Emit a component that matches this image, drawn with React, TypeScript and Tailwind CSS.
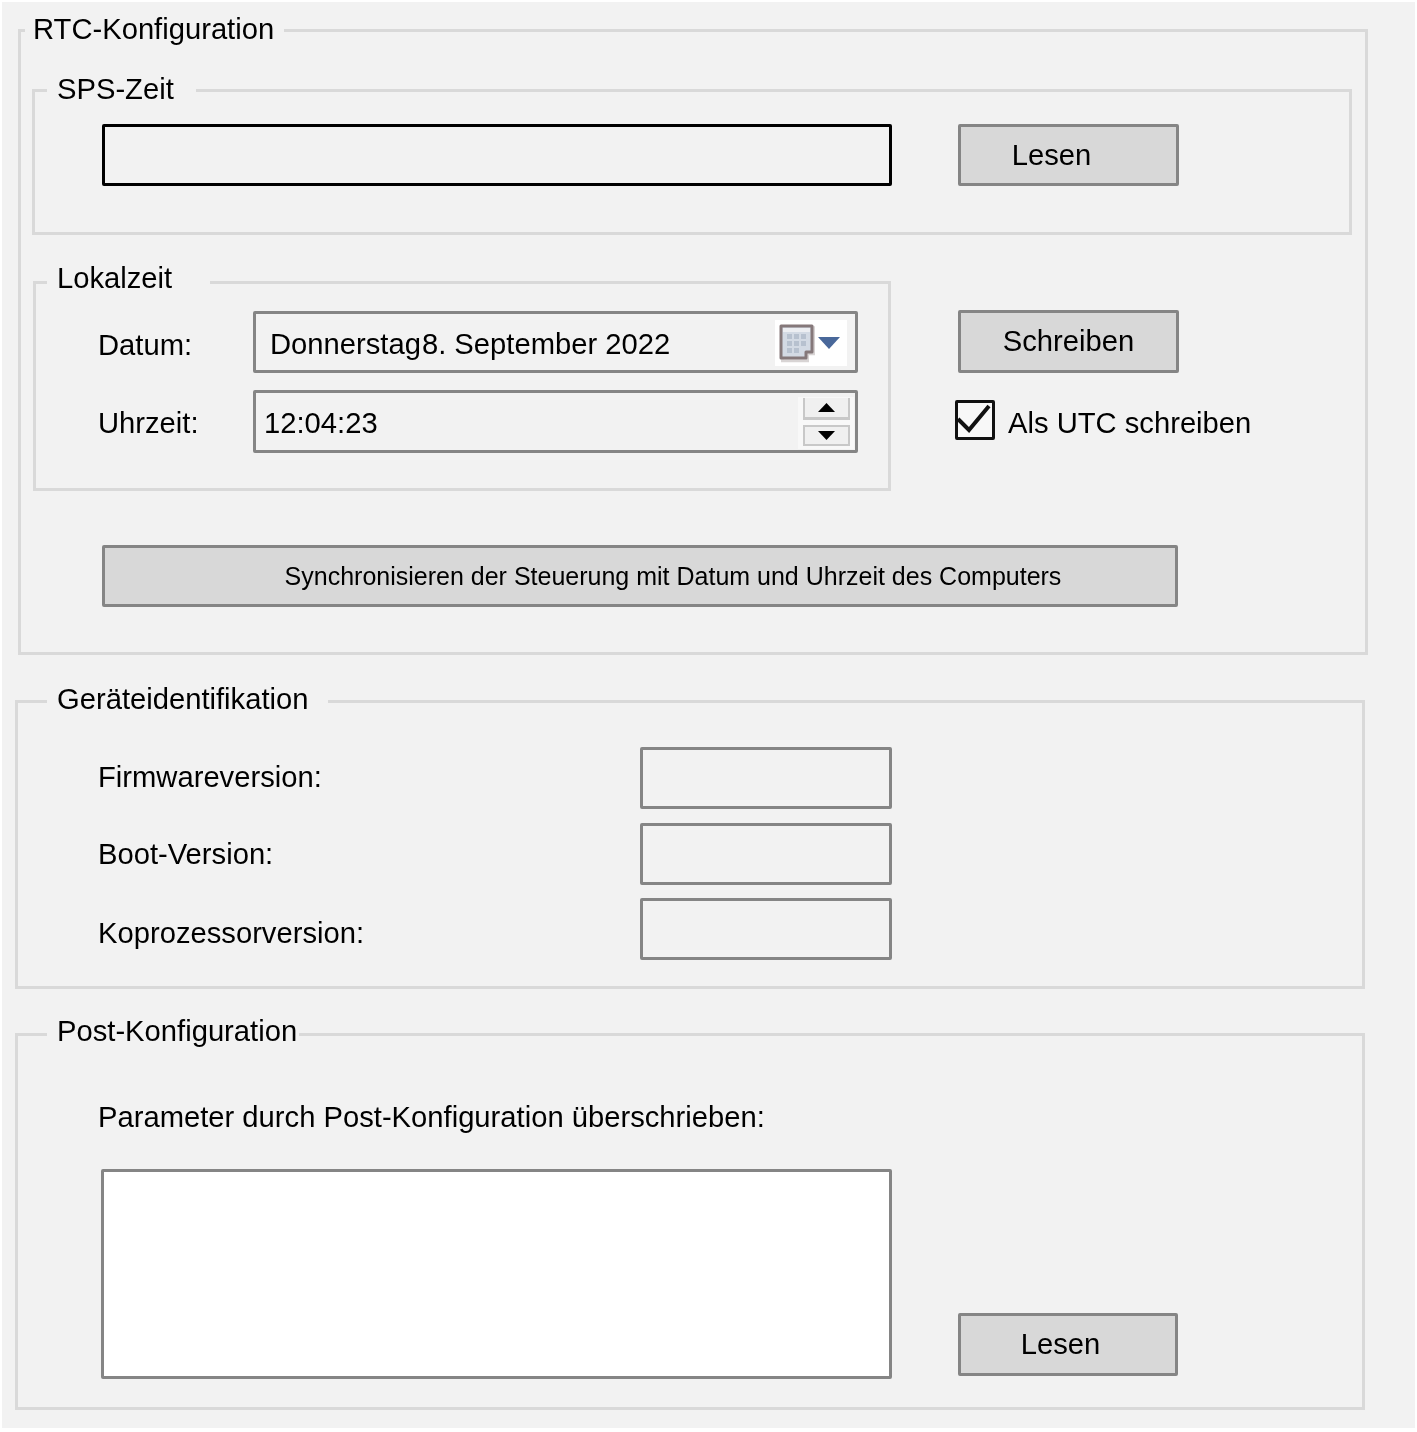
function Spin() {
  return (
    <div className="ml-auto mr-px mt-[2px] flex h-[52px] w-[56px] flex-col items-center bg-[#f8f8f8] pt-[1px]">
      <div className="flex h-[22px] w-[47px] items-center justify-center border-x-[2px] border-b-[3px] border-[#c8c8c8] bg-[#f0f0f0]">
        <svg width="17" height="9" viewBox="0 0 17 9"><path d="M8.5 0 L17 9 L0 9 Z" fill="#000" /></svg>
      </div>
      <div className="mt-[5px] flex h-[21px] w-[47px] items-center justify-center border-[2px] border-[#c8c8c8] bg-[#f0f0f0]">
        <svg width="17" height="9" viewBox="0 0 17 9"><path d="M0 0 L17 0 L8.5 9 Z" fill="#000" /></svg>
      </div>
    </div>
  );
}

function CalendarIcon() {
  return (
    <div className="ml-auto mr-[8px] mt-[2px] h-[46px] w-[72px] bg-white">
      <svg width="72" height="46" viewBox="0 0 72 46">
        <defs>
          <filter id="b" x="-10%" y="-10%" width="120%" height="120%"><feGaussianBlur stdDeviation="0.6" /></filter>
        </defs>
        <g filter="url(#b)">
          <path d="M7 7 H38 V33 H32 V40 H7 Z" fill="none" stroke="#d8d4d4" strokeWidth="3" transform="translate(0.5 0.8)" />
          <path d="M6 6 H37 V32 H31 V38 H6 Z" fill="#d3dae4" stroke="#85787a" strokeWidth="3" strokeLinejoin="round" />
          <rect x="8" y="8" width="27" height="4" fill="#eceef2" />
          <g fill="#b7c1cf">
            <rect x="12" y="14" width="5" height="5" /><rect x="19" y="14" width="5" height="5" /><rect x="26" y="14" width="5" height="5" />
            <rect x="12" y="21" width="5" height="5" /><rect x="19" y="21" width="5" height="5" /><rect x="26" y="21" width="5" height="5" />
            <rect x="12" y="28" width="5" height="5" /><rect x="19" y="28" width="5" height="5" />
          </g>
          <path d="M43 17 H65 L54 29 Z" fill="#4a689a" />
        </g>
      </svg>
    </div>
  );
}

export default function App() {
  return (
    <div className="h-[1432px] w-[1417px] bg-white p-[2px] font-['Liberation_Sans',Arial,sans-serif] text-[29.2px] leading-[34px] text-black">
      <div className="h-[1426px] w-[1413px] overflow-hidden bg-[#f2f2f2] pt-[27px] blur-[0.4px]">
        {/* RTC */}
        <section className="relative ml-[16px] h-[626px] w-[1350px] border-[3px] border-[#d9d9d9]">
          <div className="absolute left-[4px] top-[-20px] w-[259px] bg-[#f2f2f2] pl-[8px]">RTC-Konfiguration</div>

          <div className="relative ml-[11px] mt-[57px] h-[146px] w-[1320px] border-[3px] border-[#d9d9d9]">
            <div className="absolute left-[12px] top-[-20px] w-[149px] bg-[#f2f2f2] pl-[10px]">SPS-Zeit</div>
            <div className="ml-[67px] mt-[32px] flex gap-[66px]">
              <div className="h-[62px] w-[790px] rounded-[2px] border-[3px] border-black" />
              <div className="flex h-[62px] w-[221px] items-center justify-center rounded-[2px] border-[3px] border-[#858585] bg-[#d8d8d8] pr-[34px]">Lesen</div>
            </div>
          </div>

          <div className="ml-[12px] mt-[46px] flex gap-[67px]">
            <div className="relative h-[210px] w-[858px] border-[3px] border-[#d9d9d9]">
              <div className="absolute left-[11px] top-[-23px] w-[163px] bg-[#f2f2f2] pl-[10px]">Lokalzeit</div>
              <div className="ml-[62px] mt-[27px] flex items-center">
                <div className="w-[155px] pt-[5px]">Datum:</div>
                <div className="flex h-[62px] w-[605px] items-center rounded-[2px] border-[3px] border-[#858585] pl-[14px]">
                  <span className="pt-[4px]">Donnerstag<span className="ml-[1px]">8. September 2022</span></span>
                  <CalendarIcon />
                </div>
              </div>
              <div className="ml-[62px] mt-[17px] flex items-center">
                <div className="w-[155px] pt-[2px]">Uhrzeit:</div>
                <div className="flex h-[63px] w-[605px] items-center rounded-[2px] border-[3px] border-[#858585] pl-[8px]">
                  <span className="pt-[2px]">12:04:23</span>
                  <Spin />
                </div>
              </div>
            </div>
            <div className="pt-[29px]">
              <div className="flex h-[63px] w-[221px] items-center justify-center rounded-[2px] border-[3px] border-[#858585] bg-[#d8d8d8] pb-[2px]">Schreiben</div>
              <div className="ml-[-3px] mt-[27px] flex items-center gap-[13px]">
                <div className="flex h-[40px] w-[40px] items-center justify-center rounded-[2px] border-[3px] border-[#111] bg-[#f8f8f8]">
                  <svg width="32" height="32" viewBox="0 0 32 32" className="overflow-visible">
                    <path d="M-1 15 L10 26 L30 2" fill="none" stroke="#111" strokeWidth="4" />
                  </svg>
                </div>
                <span className="whitespace-nowrap pt-[6px]">Als UTC schreiben</span>
              </div>
            </div>
          </div>

          <div className="ml-[81px] mt-[54px] flex h-[62px] w-[1076px] items-center justify-center rounded-[2px] border-[3px] border-[#858585] bg-[#d8d8d8] pl-[66px] text-[25px]">
            Synchronisieren der Steuerung mit Datum und Uhrzeit des Computers
          </div>
        </section>

        {/* Geräteidentifikation */}
        <section className="relative ml-[13px] mt-[45px] h-[289px] w-[1350px] border-[3px] border-[#d9d9d9]">
          <div className="absolute left-[29px] top-[-21px] w-[281px] bg-[#f2f2f2] pl-[10px]">Geräteidentifikation</div>
          <div className="ml-[80px] mt-[44px] flex flex-col">
            <div className="flex items-center">
              <div className="w-[542px] pb-[2px]">Firmwareversion:</div>
              <div className="h-[62px] w-[252px] rounded-[2px] border-[3px] border-[#858585]" />
            </div>
            <div className="mt-[14px] flex items-center">
              <div className="w-[542px] pb-[1px]">Boot-Version:</div>
              <div className="h-[62px] w-[252px] rounded-[2px] border-[3px] border-[#858585]" />
            </div>
            <div className="mt-[13px] flex items-center">
              <div className="w-[542px] pt-[7px]">Koprozessorversion:</div>
              <div className="h-[62px] w-[252px] rounded-[2px] border-[3px] border-[#858585]" />
            </div>
          </div>
        </section>

        {/* Post */}
        <section className="relative ml-[13px] mt-[44px] h-[377px] w-[1350px] border-[3px] border-[#d9d9d9]">
          <div className="absolute left-[29px] top-[-22px] w-[252px] bg-[#f2f2f2] pl-[10px]">Post-Konfiguration</div>
          <div className="ml-[80px] pt-[64px]">Parameter durch Post-Konfiguration überschrieben:</div>
          <div className="ml-[83px] mt-[35px] flex items-end gap-[66px]">
            <div className="h-[210px] w-[791px] rounded-[2px] border-[3px] border-[#858585] bg-white" />
            <div className="mb-[3px] flex h-[63px] w-[220px] items-center justify-center rounded-[2px] border-[3px] border-[#858585] bg-[#d8d8d8] pb-[2px] pr-[15px]">Lesen</div>
          </div>
        </section>
      </div>
    </div>
  );
}
